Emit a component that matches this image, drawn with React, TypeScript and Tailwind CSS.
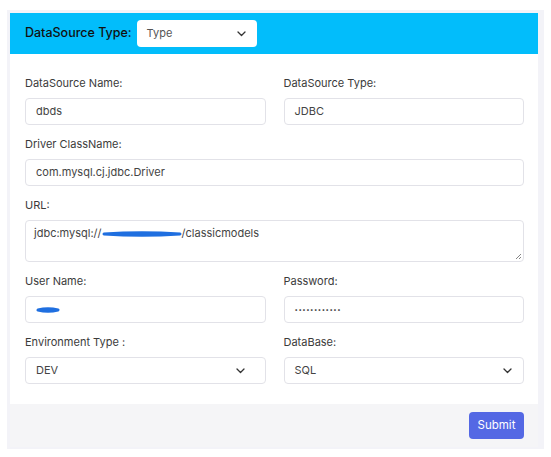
import React from "react";

const font = { fontFamily: "Inter, 'Noto Sans', sans-serif" };

function Chevron({ className = "" }: { className?: string }) {
  return (
    <svg width="9" height="6" viewBox="0 0 9 6" className={className}>
      <path d="M1 1 L4.5 4.5 L8 1" fill="none" stroke="#333" strokeWidth="1.3" strokeLinecap="round" strokeLinejoin="round" />
    </svg>
  );
}

function Label({ children }: { children: React.ReactNode }) {
  return <div className="text-[11px] leading-[16px] text-[#3b3b3b] mb-[7px]">{children}</div>;
}

function Box({ children, className = "" }: { children?: React.ReactNode; className?: string }) {
  return (
    <div className={"h-[27px] rounded-[4px] border border-[#e2e2e8] bg-white flex items-center px-[10px] text-[11px] text-[#444] " + className}>
      {children}
    </div>
  );
}

function Scribble({ w }: { w: number }) {
  return (
    <svg width={w} height="6" viewBox={`0 0 ${w} 6`} className="inline-block">
      <path d={`M2 3 Q${w / 2} 0.5 ${w - 2} 3 Q${w / 2} 5.5 2 3 Z`} fill="#1f6fe0" stroke="#1f6fe0" strokeWidth="3" strokeLinejoin="round" />
    </svg>
  );
}

export default function App() {
  return (
    <div className="w-[551px] h-[457px] bg-white pt-[10px] pl-[7px]" style={font}>
      <div className="w-[537px] bg-[#f3f3f8] pt-[3px] pl-[3px] pr-[6px] pb-[2px]">
        <div className="w-[528px] bg-white">
          <div className="h-[41px] bg-[#02bdfb] flex items-center px-[15px] gap-[5px]">
            <span className="text-[12.5px] font-medium text-[#111]">DataSource Type:</span>
            <div className="w-[120px] h-[27px] bg-white rounded-[4px] flex items-center justify-between pl-[10px] pr-[11px]">
              <span className="text-[11px] text-[#555]">Type</span>
              <Chevron />
            </div>
          </div>
          <div className="px-[15px] pr-[14px] pt-[21px] pb-[20px] grid grid-cols-2 gap-x-[18px] gap-y-[11px]">
            <div>
              <Label>DataSource Name:</Label>
              <Box>dbds</Box>
            </div>
            <div>
              <Label>DataSource Type:</Label>
              <Box>JDBC</Box>
            </div>
            <div className="col-span-2">
              <Label>Driver ClassName:</Label>
              <Box>com.mysql.cj.jdbc.Driver</Box>
            </div>
            <div className="col-span-2">
              <Label>URL:</Label>
              <div className="relative h-[42px] rounded-[4px] border border-[#e2e2e8] bg-white px-[8px] pt-[4px] text-[11px] text-[#444] leading-[16px]">
                <span>jdbc:mysql://</span>
                <Scribble w={80} />
                <span>/classicmodels</span>
                <svg width="7" height="7" viewBox="0 0 7 7" className="absolute right-[1px] bottom-[1px]">
                  <path d="M6 1 L1 6 M6 4 L4 6" stroke="#777" strokeWidth="0.9" />
                </svg>
              </div>
            </div>
            <div>
              <Label>User Name:</Label>
              <Box>
                <Scribble w={24} />
              </Box>
            </div>
            <div>
              <Label>Password:</Label>
              <Box>
                <span className="text-[6px] tracking-[0.5px] text-[#333]">••••••••••••</span>
              </Box>
            </div>
            <div>
              <Label>Environment Type :</Label>
              <Box className="justify-between pr-[20px]">
                <span>DEV</span>
                <Chevron />
              </Box>
            </div>
            <div>
              <Label>DataBase:</Label>
              <Box className="justify-between pr-[11px]">
                <span>SQL</span>
                <Chevron />
              </Box>
            </div>
          </div>
          <div className="h-[43px] bg-[#f5f5f7] flex items-center justify-end pr-[14px]">
            <button className="w-[55px] h-[27px] rounded-[4px] bg-[#5468e4] text-white text-[11.5px]">Submit</button>
          </div>
        </div>
      </div>
    </div>
  );
}
